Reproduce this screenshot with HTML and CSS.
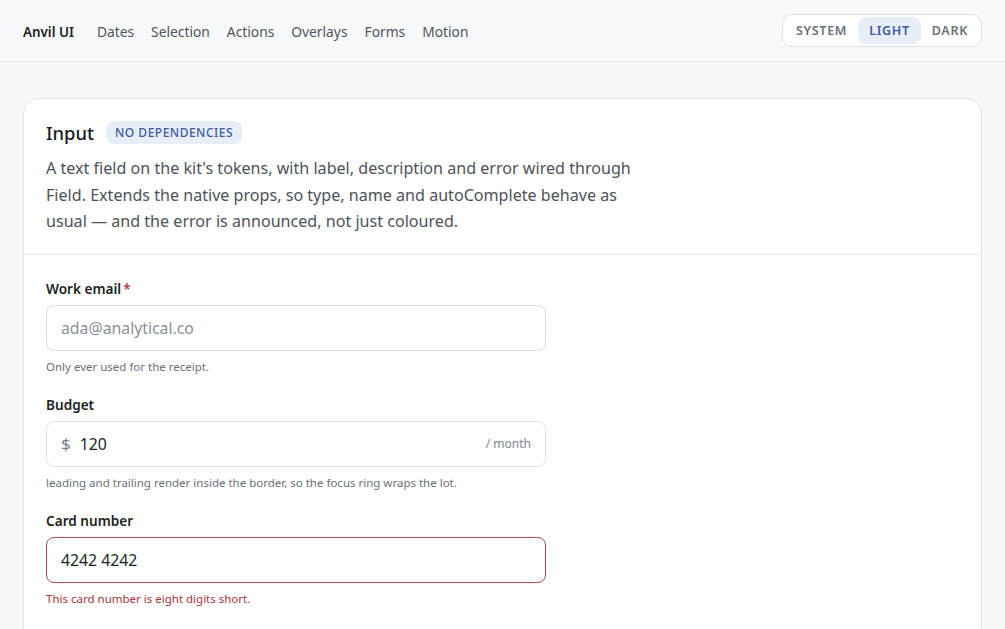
FILE: index.html
```html
<!DOCTYPE html>
<html lang="en">
<head>
    <meta charset="UTF-8">
    <meta name="viewport" content="width=device-width, initial-scale=1.0">
    <title>Anvil UI · Input</title>
    <link rel="stylesheet" href="styles.css">
</head>
<body>
    <header class="topbar">
        <nav class="nav">
            <a class="brand" href="#">Anvil UI</a>
            <a href="#">Dates</a>
            <a href="#">Selection</a>
            <a href="#">Actions</a>
            <a href="#">Overlays</a>
            <a href="#">Forms</a>
            <a href="#">Motion</a>
        </nav>
        <div class="theme-toggle">
            <button>SYSTEM</button>
            <button class="active">LIGHT</button>
            <button>DARK</button>
        </div>
    </header>

    <main class="page">
        <section class="card">
            <div class="card-head">
                <div class="title-row">
                    <h2>Input</h2>
                    <span class="badge">NO DEPENDENCIES</span>
                </div>
                <p class="lede">A text field on the kit's tokens, with label, description and error wired through Field. Extends the native props, so type, name and autoComplete behave as usual — and the error is announced, not just coloured.</p>
            </div>
            <div class="card-body">
                <div class="field">
                    <label for="email">Work email<span class="req">*</span></label>
                    <div class="control">
                        <input id="email" type="email" placeholder="ada@analytical.co">
                    </div>
                    <p class="hint">Only ever used for the receipt.</p>
                </div>
                <div class="field">
                    <label for="budget">Budget</label>
                    <div class="control">
                        <span class="leading">$</span>
                        <input id="budget" type="text" value="120">
                        <span class="trailing">/ month</span>
                    </div>
                    <p class="hint">leading and trailing render inside the border, so the focus ring wraps the lot.</p>
                </div>
                <div class="field">
                    <label for="card">Card number</label>
                    <div class="control invalid">
                        <input id="card" type="text" value="4242 4242" aria-invalid="true">
                    </div>
                    <p class="hint error" role="alert">This card number is eight digits short.</p>
                </div>
            </div>
        </section>
    </main>
</body>
</html>
```
FILE: styles.css
```css
* {
    box-sizing: border-box;
}
body {
    font-family: "Noto Sans", "Open Sans", sans-serif;
    margin: 0;
    padding: 0;
    background-color: #f7f8fa;
    color: #1f2328;
}
.topbar {
    height: 62px;
    display: flex;
    align-items: center;
    justify-content: space-between;
    padding: 0 23px;
    background: #f8f9fb;
    border-bottom: 1px solid #e3e5e9;
}
.nav {
    display: flex;
    align-items: center;
    gap: 17px;
    padding-top: 2px;
}
.nav a {
    color: #50555d;
    text-decoration: none;
    font-size: 13.8px;
}
.nav .brand {
    color: #1a1d21;
    font-weight: 600;
    font-size: 13.4px;
    margin-right: 6px;
}
.theme-toggle {
    display: flex;
    padding: 2px;
    border: 1px solid #dcdfe4;
    border-radius: 10px;
    background: #fff;
}
.theme-toggle button {
    font-family: inherit;
    font-size: 12.5px;
    font-weight: 600;
    letter-spacing: 0.7px;
    color: #6b7079;
    background: none;
    border: none;
    border-radius: 8px;
    padding: 5px 11px;
    height: 27px;
    cursor: pointer;
}
.theme-toggle button.active {
    background: #e8eef8;
    color: #3a5aa3;
}
.page {
    padding: 36px 23px 40px;
}
.card {
    background: #fff;
    border: 1px solid #e2e4e8;
    border-radius: 16px;
}
.card-head {
    padding: 19px 22px 19px;
    border-bottom: 1px solid #e2e4e8;
}
.title-row {
    display: flex;
    align-items: center;
    gap: 12px;
    height: 28px;
}
.title-row h2 {
    margin: 0;
    font-size: 18.4px;
    font-weight: 500;
    color: #16191d;
}
.badge {
    background: #e8eef8;
    color: #3a5aa3;
    font-size: 12px;
    font-weight: 500;
    letter-spacing: 0.5px;
    padding: 3px 9px;
    border-radius: 8px;
}
.lede {
    margin: 9px 0 0;
    max-width: 592px;
    font-size: 16.1px;
    line-height: 26.5px;
    color: #4d525a;
}
.card-body {
    padding: 24px 22px 60px;
    display: flex;
    flex-direction: column;
    gap: 20px;
}
.field {
    width: 500px;
}
.field label {
    display: block;
    font-size: 13.6px;
    font-weight: 600;
    line-height: 20px;
    color: #1c1f23;
}
.req {
    color: #b23a40;
    margin-left: 2px;
}
.control {
    margin-top: 6px;
    height: 46px;
    display: flex;
    align-items: center;
    padding: 0 14px;
    border: 1px solid #dcdfe4;
    border-radius: 8px;
    background: #fff;
}
.control input {
    flex: 1;
    min-width: 0;
    border: none;
    outline: none;
    background: none;
    padding: 0;
    font-family: inherit;
    font-size: 15.8px;
    color: #1c1f23;
}
.control input::placeholder {
    color: #8b9098;
}
.leading {
    color: #7a7f87;
    font-size: 17px;
    margin-right: 9px;
}
.trailing {
    color: #80858d;
    font-size: 12px;
}
.control.invalid {
    border-color: #b6464c;
}
.hint {
    margin: 8px 0 0;
    font-size: 11.5px;
    line-height: 16px;
    color: #6b7079;
}
.hint.error {
    color: #a8353b;
}
```
